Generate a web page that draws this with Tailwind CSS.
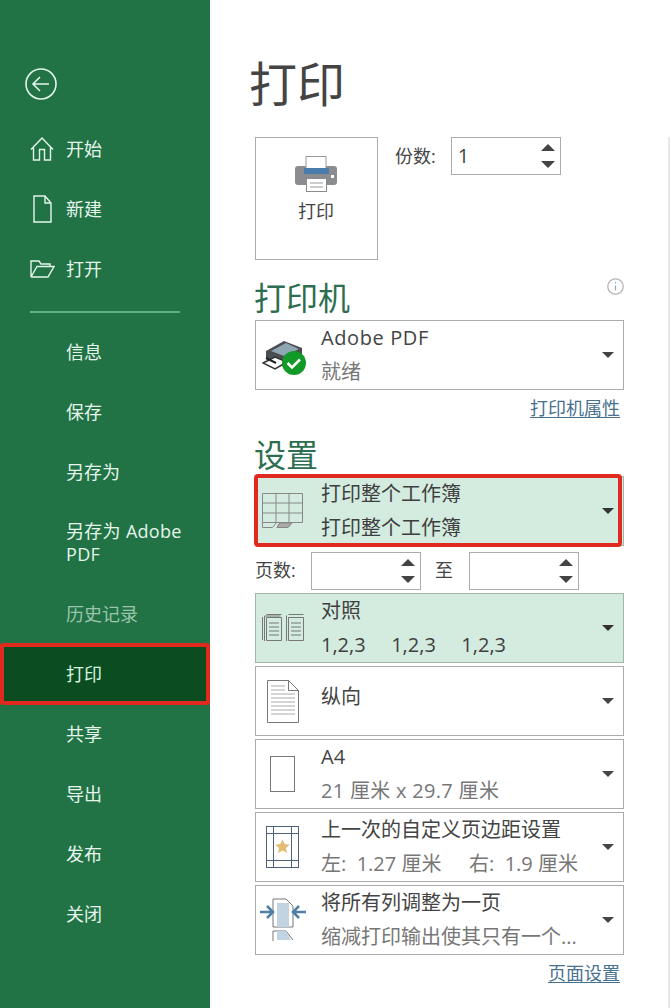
<!DOCTYPE html>
<html lang="zh-CN">
<head>
  <meta charset="UTF-8" />
  <title>打印</title>
  <script src="https://cdn.jsdelivr.net/npm/@tailwindcss/browser@4"></script>
</head>
<body class="bg-white font-['Open_Sans','Noto_Sans_CJK_SC',sans-serif] text-[#444]">
  <div class="flex w-[671px] h-[1008px] overflow-hidden">

    <!-- Sidebar -->
    <aside class="w-[210px] shrink-0 bg-[#217346] text-[18px] text-[#e6f5ec] flex flex-col relative">
      <div class="h-[119px] pt-[68px] pl-[25px]">
        <svg width="32" height="32" viewBox="0 0 32 32" fill="none" stroke="#e6f5ec" stroke-width="1.6"><circle cx="16" cy="16" r="15"/><path d="M24 16H8M15 9l-7 7 7 7"/></svg>
      </div>
      <div class="h-[60px] flex items-center">
        <div class="w-[66px] pl-[30px]">
          <svg width="24" height="24" viewBox="0 0 24 24" fill="none" stroke="#e6f5ec" stroke-width="1.4"><path d="M1 12.5 12 1l11 11.5M3.500 10v13h6V12.500h5V23h6V10"/></svg>
        </div>
        <span>开始</span>
      </div>
      <div class="h-[60px] flex items-center">
        <div class="w-[66px] pl-[33px]">
          <svg width="19" height="28" viewBox="0 0 19 28" fill="none" stroke="#e6f5ec" stroke-width="1.4"><path d="M1 1h11l6 7v19H1zM12 1v7h6"/></svg>
        </div>
        <span>新建</span>
      </div>
      <div class="h-[60px] flex items-center">
        <div class="w-[66px] pl-[30px]">
          <svg width="25" height="18" viewBox="0 0 25 18" fill="none" stroke="#e6f5ec" stroke-width="1.4"><path d="M1 17V1h8l2 3h9v2.500M1 17h17l6-10.500H7L1 17"/></svg>
        </div>
        <span>打开</span>
      </div>
      <div class="h-[23px] pt-[12px] pl-[30px]">
        <div class="w-[150px] h-[2px] bg-[#62ad86]"></div>
      </div>
      <div class="h-[60px] flex items-center pl-[66px]">信息</div>
      <div class="h-[60px] flex items-center pl-[66px]">保存</div>
      <div class="h-[60px] flex items-center pl-[66px]">另存为</div>
      <div class="h-[82px] pl-[66px] pt-[18px] leading-[23px] tracking-[0.3px]">另存为 Adobe<br />PDF</div>
      <div class="h-[60px] flex items-center pl-[66px] text-[#9cc4ad]">历史记录</div>
      <div class="h-[62px] -my-px flex items-center pl-[62px] bg-[#0b4c20] border-4 border-[#e0291f] rounded-[3px] text-[#d5f5e0] relative">打印</div>
      <div class="h-[60px] flex items-center pl-[66px]">共享</div>
      <div class="h-[60px] flex items-center pl-[66px]">导出</div>
      <div class="h-[60px] flex items-center pl-[66px]">发布</div>
      <div class="h-[60px] flex items-center pl-[66px]">关闭</div>
    </aside>

    <!-- Print panel -->
    <main class="flex-1 relative pl-[45px]">
      <div class="absolute left-[458px] top-[137px] bottom-0 w-[2px] bg-[#e8e8e8]"></div>

      <div class="w-[369px]">
        <h1 class="h-[137px] -ml-[6px] pt-[52px] text-[48px] leading-[64px] text-[#444]">打印</h1>

        <div class="flex h-[123px]">
          <div class="w-[123px] h-[123px] border border-[#ababab] flex flex-col items-center pt-[18px]">
            <svg class="-ml-px" width="42" height="36" viewBox="0 0 42 36">
              <rect x="0" y="10" width="42" height="19" rx="3" fill="#8a8c8f"/>
              <rect x="11" y="0.500" width="20" height="14" fill="#fff" stroke="#9a9a9a"/>
              <rect x="9" y="12" width="25" height="6" fill="#4a7cae"/>
              <rect x="11.500" y="22.500" width="20" height="13" fill="#fff" stroke="#8a8c8f"/>
              <path d="M15 27h13M15 31h13" stroke="#9a9a9a"/>
              <rect x="36" y="19" width="3" height="3" fill="#fff"/>
            </svg>
            <span class="text-[18px] leading-[24px] mt-[7px] -ml-px">打印</span>
          </div>
          <div class="ml-[17px] h-[38px] flex items-center text-[18px]">份数:</div>
          <div class="ml-[15px] w-[110px] h-[38px] border border-[#ababab] flex items-center justify-between pl-[6px] pr-[5px]">
            <span class="text-[20px]">1</span>
            <div class="flex flex-col gap-[10px]">
              <div class="w-0 h-0 border-x-[7px] border-x-transparent border-b-[7px] border-b-[#444]"></div>
              <div class="w-0 h-0 border-x-[7px] border-x-transparent border-t-[7px] border-t-[#444]"></div>
            </div>
          </div>
        </div>

        <div class="h-[60px] flex justify-between items-start">
          <h2 class="-ml-px pt-[15px] text-[32px] leading-[46px] text-[#2e6e50]">打印机</h2>
          <svg class="mt-[18px]" width="17" height="17" viewBox="0 0 17 17" fill="none"><circle cx="8.500" cy="8.500" r="7.700" stroke="#b5b5b5" stroke-width="1.300"/><path d="M8.500 7.500v5" stroke="#8fa8c0" stroke-width="1.200"/><path d="M8.500 4v1.500" stroke="#8fa8c0" stroke-width="1.200"/></svg>
        </div>

        <!-- Printer -->
        <div class="h-[70px] border border-[#ababab] flex items-center">
          <div class="w-[65px] shrink-0 pl-[6px] pt-[6px]">
            <svg width="46" height="38" viewBox="0 0 46 38">
              <path d="M4 12 22 2l18 7v10L22 28 4 20z" fill="#4a4d52"/>
              <path d="M9 12 24 4l13 6-15 7z" fill="#8fa6b5"/>
              <path d="M1 24 13 18l12 5-12 7z" fill="#fff" stroke="#333" stroke-width="1.500"/>
              <path d="M4 19l10 5" stroke="#222" stroke-width="2"/>
              <circle cx="32" cy="24" r="12" fill="#129a28"/>
              <path d="M25.500 24l4.500 4.500 8-8" fill="none" stroke="#fff" stroke-width="2.500"/>
            </svg>
          </div>
          <div class="flex-1 leading-[34px] -mt-px">
            <div class="text-[20px] text-[#444] tracking-[0.6px]">Adobe PDF</div>
            <div class="text-[20px] text-[#777]">就绪</div>
          </div>
          <div class="mr-[9px] w-0 h-0 border-x-[6px] border-x-transparent border-t-[6px] border-t-[#444]"></div>
        </div>

        <div class="h-[36px] pr-[4px] text-right text-[18px] leading-[36px] text-[#48708f]"><span class="underline underline-offset-2">打印机属性</span></div>

        <h2 class="h-[50px] -ml-px pt-[6px] text-[32px] leading-[46px] text-[#2e6e50]">设置</h2>

        <!-- Print range -->
        <div class="h-[70px] border border-[#a3b8ac] bg-[#d3ecdf] flex items-center relative">
          <div class="w-[65px] shrink-0 pl-[6px]">
            <svg width="41" height="36" viewBox="0 0 41 36" fill="none" stroke="#888">
              <path d="M0.500 0.500h40v29h-40zM0.500 10h40M0.500 20h40M14 0.500v29M27 0.500v29"/>
              <path d="M0.500 29.500v5h10l4-5M18 29.500l-3 5h11l4-5" />
              <path d="M18 30h12l-4 4.500H15z" fill="#aaa"/>
            </svg>
          </div>
          <div class="flex-1 text-[20px] leading-[34px] text-[#3f3f3f] -mt-px">
            <div>打印整个工作簿</div>
            <div>打印整个工作簿</div>
          </div>
          <div class="mr-[9px] w-0 h-0 border-x-[6px] border-x-transparent border-t-[6px] border-t-[#333]"></div>
          <div class="absolute -left-[2px] -top-[3px] right-[1px] -bottom-[2px] border-4 border-[#e0291f] rounded-[4px]"></div>
        </div>

        <!-- Pages -->
        <div class="h-[47px] pt-[6px] flex">
          <div class="w-[56px] h-[38px] flex items-center text-[18px] -mt-px">页数:</div>
          <div class="w-[110px] h-[38px] border border-[#ababab] flex items-center justify-end pr-[5px]">
            <div class="flex flex-col gap-[10px]">
              <div class="w-0 h-0 border-x-[7px] border-x-transparent border-b-[7px] border-b-[#444]"></div>
              <div class="w-0 h-0 border-x-[7px] border-x-transparent border-t-[7px] border-t-[#444]"></div>
            </div>
          </div>
          <div class="w-[48px] h-[38px] flex items-center justify-center text-[18px] -mt-px -ml-px">至</div>
          <div class="ml-px w-[110px] h-[38px] border border-[#ababab] flex items-center justify-end pr-[5px]">
            <div class="flex flex-col gap-[10px]">
              <div class="w-0 h-0 border-x-[7px] border-x-transparent border-b-[7px] border-b-[#444]"></div>
              <div class="w-0 h-0 border-x-[7px] border-x-transparent border-t-[7px] border-t-[#444]"></div>
            </div>
          </div>
        </div>

        <div class="flex flex-col gap-[3px]">
          <!-- Collate -->
          <div class="h-[70px] border border-[#a3b8ac] bg-[#d3ecdf] flex items-center">
            <div class="w-[65px] shrink-0 pl-[6px]">
              <svg width="42" height="28" viewBox="0 0 42 28" fill="none" stroke="#777">
                <path d="M0.500 26V3M2.500 27V2h16M4.500 0.500h15"/>
                <path d="M4.500 3.500h15v23h-15zM7 9h10M7 13h10M7 17h10M7 21h10"/>
                <path d="M24.500 1.500V27M26.500 0.500h15"/>
                <path d="M26.500 3.500h15v23h-15zM29 9h10M29 13h10M29 17h10M29 21h10"/>
              </svg>
            </div>
            <div class="flex-1 text-[20px] leading-[34px] text-[#3f3f3f] -mt-px">
              <div>对照</div>
              <div class="flex gap-[25.500px]"><span>1,2,3</span><span>1,2,3</span><span>1,2,3</span></div>
            </div>
            <div class="mr-[9px] w-0 h-0 border-x-[6px] border-x-transparent border-t-[6px] border-t-[#333]"></div>
          </div>

          <!-- Orientation -->
          <div class="h-[70px] border border-[#ababab] flex items-center">
            <div class="w-[65px] shrink-0 pl-[11px]">
              <svg width="32" height="43" viewBox="0 0 32 43" fill="none" stroke="#777">
                <path d="M0.500 0.500h21l10 10v32h-31zM21.500 0.500v10h10"/>
                <path d="M4 6h14M4 10h14M4 14h24M4 18h24M4 22h24M4 26h24M4 30h24M4 34h24" stroke="#aaa"/>
              </svg>
            </div>
            <div class="flex-1 text-[20px] leading-[34px] -mt-[9px] text-[#444]">纵向</div>
            <div class="mr-[9px] w-0 h-0 border-x-[6px] border-x-transparent border-t-[6px] border-t-[#444]"></div>
          </div>

          <!-- Paper -->
          <div class="h-[70px] border border-[#ababab] flex items-center">
            <div class="w-[65px] shrink-0 pl-[14px]">
              <svg width="25" height="36" viewBox="0 0 25 36" fill="none"><rect x="0.500" y="0.500" width="24" height="35" stroke="#777"/></svg>
            </div>
            <div class="flex-1 text-[20px] leading-[34px] -mt-px">
              <div class="text-[#444]">A4</div>
              <div class="text-[#777] tracking-[0.3px]">21 厘米 x 29.7 厘米</div>
            </div>
            <div class="mr-[9px] w-0 h-0 border-x-[6px] border-x-transparent border-t-[6px] border-t-[#444]"></div>
          </div>

          <!-- Margins -->
          <div class="h-[70px] border border-[#ababab] flex items-center">
            <div class="w-[65px] shrink-0 pl-[10px]">
              <svg width="33" height="42" viewBox="0 0 33 42" fill="none" stroke="#4d6278">
                <rect x="0.500" y="0.500" width="32" height="41"/>
                <path d="M7.500 0.500v41M25.500 0.500v41M0.500 7.500h32M0.500 34.500h32"/>
                <path d="M16.500 13.500l2.200 4.600 5 .6-3.700 3.400 1 5-4.500-2.500-4.500 2.500 1-5-3.700-3.400 5-.6z" fill="#e2bd73" stroke="none"/>
              </svg>
            </div>
            <div class="flex-1 text-[20px] leading-[34px] -mt-px">
              <div class="text-[#444]">上一次的自定义页边距设置</div>
              <div class="text-[#777] flex whitespace-pre"><span class="w-[148px]">左:  1.27 厘米</span><span>右:  1.9 厘米</span></div>
            </div>
            <div class="mr-[9px] w-0 h-0 border-x-[6px] border-x-transparent border-t-[6px] border-t-[#444]"></div>
          </div>

          <!-- Scaling -->
          <div class="h-[70px] border border-[#ababab] flex items-center">
            <div class="w-[65px] shrink-0 pl-[3px]">
              <svg width="48" height="44" viewBox="0 0 48 44" fill="none">
                <path d="M14 1h13l7 7v21H14z" fill="#fff" stroke="#777"/>
                <rect x="18" y="5" width="12" height="24" fill="#c2d3e2"/>
                <path d="M14 43V33h13l7 9" stroke="#777"/>
                <path d="M18 33h9l5 9H18z" fill="#c2d3e2"/>
                <path d="M1 14h13M8 8l6 6-6 6M47 14H34M40 8l-6 6 6 6" stroke="#4f7ea8" stroke-width="2.500"/>
              </svg>
            </div>
            <div class="flex-1 text-[20px] leading-[34px] whitespace-nowrap overflow-hidden -mt-px">
              <div class="text-[#444]">将所有列调整为一页</div>
              <div class="text-[#777]">缩减打印输出使其只有一个...</div>
            </div>
            <div class="mr-[9px] w-0 h-0 shrink-0 border-x-[6px] border-x-transparent border-t-[6px] border-t-[#444]"></div>
          </div>
        </div>

        <div class="h-[36px] pr-[4px] text-right text-[18px] leading-[36px] text-[#48708f]"><span class="underline underline-offset-2">页面设置</span></div>
      </div>
    </main>
  </div>
</body>
</html>
